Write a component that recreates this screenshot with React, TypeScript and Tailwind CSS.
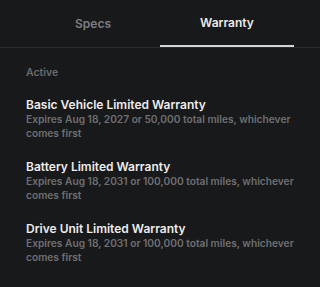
const warranties = [
  {
    title: "Basic Vehicle Limited Warranty",
    detail: "Expires Aug 18, 2027 or 50,000 total miles, whichever comes first",
  },
  {
    title: "Battery Limited Warranty",
    detail: "Expires Aug 18, 2031 or 100,000 total miles, whichever comes first",
  },
  {
    title: "Drive Unit Limited Warranty",
    detail: "Expires Aug 18, 2031 or 100,000 total miles, whichever comes first",
  },
];

export default function App() {
  return (
    <div
      className="w-[320px] h-[287px] bg-[#18191b] overflow-hidden"
      style={{ fontFamily: "Inter, 'Noto Sans', sans-serif" }}
    >
      {/* tabs */}
      <div className="border-b border-[#2a2b2e]">
        <div className="flex px-[26px]">
          <button className="flex-1 h-[47px] pt-[1px] flex items-center justify-center text-[12px] font-semibold text-[#7d7e81]">
            Specs
          </button>
          <button className="flex-1 h-[47px] pt-[1px] flex items-center justify-center text-[12px] font-semibold text-[#ececec] border-b-2 border-[#d4d4d4]">
            Warranty
          </button>
        </div>
      </div>

      <div className="px-[26px] pt-[18px]">
        <p className="text-[10.5px] font-semibold text-[#6a6b6e] leading-[14px]">Active</p>
        <div className="mt-[17px] flex flex-col gap-[19px]">
          {warranties.map((w) => (
            <div key={w.title}>
              <h3 className="text-[12px] font-semibold text-[#ececec] leading-[15px]">{w.title}</h3>
              <p className="w-[285px] text-[10.2px] font-semibold text-[#6e6f72] leading-[14px]">
                {w.detail}
              </p>
            </div>
          ))}
        </div>
      </div>
    </div>
  );
}
